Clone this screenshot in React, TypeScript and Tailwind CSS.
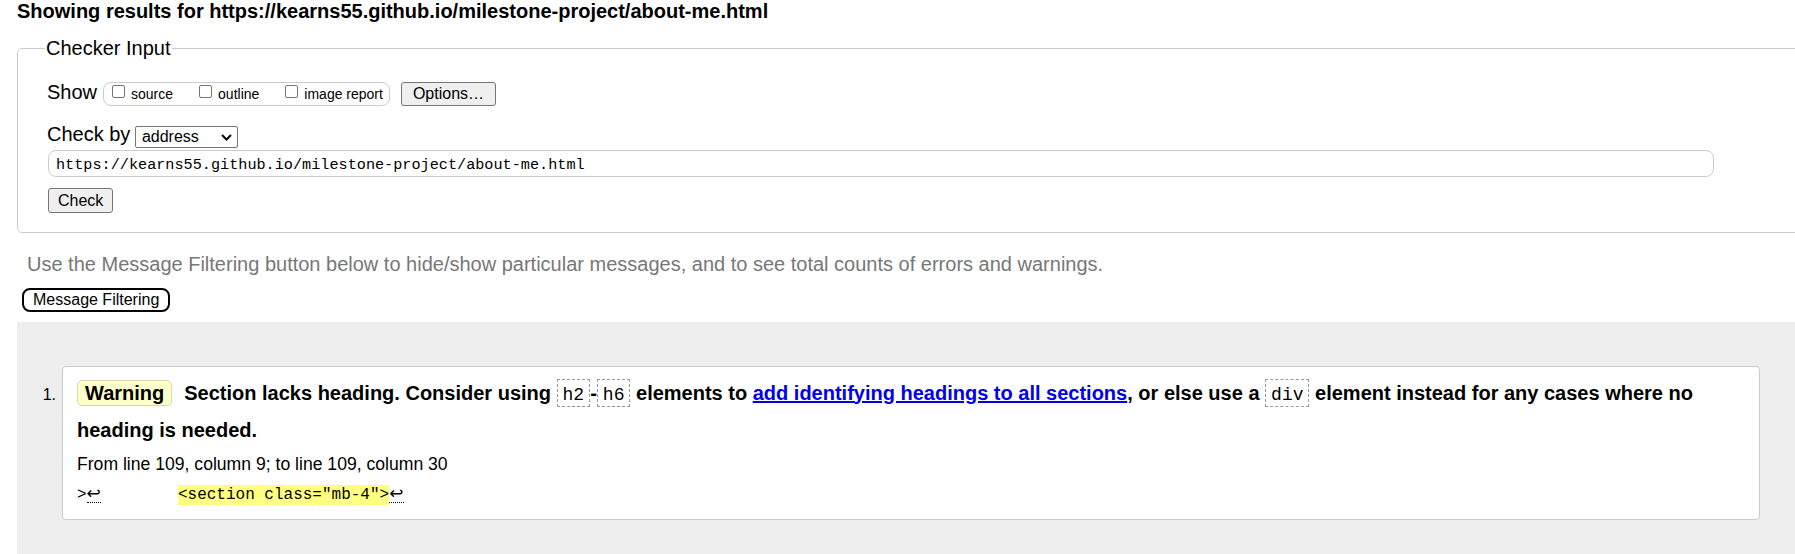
export default function App() {
  const mono = "font-['Liberation_Mono','DejaVu_Sans_Mono',monospace]";

  const Code = ({ children }: { children: string }) => (
    <code className={`inline-block border border-dashed border-[#999] px-[5px] pt-[4px] text-[18px] leading-[22px] font-normal ${mono}`}>
      {children}
    </code>
  );

  const Lf = () => (
    <span className="inline-block w-[14.5px] border-b border-dotted border-black leading-[17px] font-['DejaVu_Sans',sans-serif] text-[17px]">↩</span>
  );

  const Box = () => (
    <span className="inline-block w-[13px] h-[13px] ml-[4px] mr-[6px] mb-[5px] border border-[#767676] rounded-[2px] bg-white" />
  );

  return (
    <div className="w-[1795px] h-[554px] overflow-hidden bg-white text-black font-['Liberation_Sans',Arial,sans-serif]">
      <h2 className="pl-[17px] text-[20px] leading-[23px] font-bold whitespace-nowrap">
        Showing results for https://kearns55.github.io/milestone-project/about-me.html
      </h2>

      <fieldset className="ml-[17px] mt-[13.5px] w-[1800px] border border-[#ccc] rounded-[5px] pl-[29px] pt-[22.5px] pb-[19px]">
        <legend className="-ml-[2px] px-[1px] text-[20px] leading-[23px]">Checker Input</legend>

        <div className="flex items-center h-[24px]">
          <span className="text-[20px] leading-[20px] mb-[4px]">Show</span>
          <div className="ml-[6px] h-[24px] flex items-center border border-[#ccc] rounded-[8px] pl-[4px] pr-[6px] text-[14px] leading-[16px]">
            <label className="flex items-center mr-[22px]"><Box />source</label>
            <label className="flex items-center mr-[22px]"><Box />outline</label>
            <label className="flex items-center"><Box />image report</label>
          </div>
          <button className="ml-[11px] h-[24px] px-[11px] border border-[#767676] bg-[#efefef] rounded-[3px] text-[16px] leading-[18px]">
            Options…
          </button>
        </div>

        <div className="mt-[17px] flex items-start">
          <span className="text-[20px] leading-[23px]">Check by</span>
          <div className="ml-[4.5px] mt-[3px] h-[22px] w-[103px] flex items-center justify-between border border-[#767676] rounded-[2px] bg-white pl-[6px] pr-[5px] text-[16px]">
            <span>address</span>
            <svg width="11" height="7" viewBox="0 0 11 7">
              <path d="M1 1l4.5 4.5L10 1" stroke="#000" strokeWidth="2" fill="none" />
            </svg>
          </div>
        </div>

        <div className={`ml-[1px] mt-[2px] h-[27px] w-[1666px] flex items-center border border-[#ccc] rounded-[8px] pl-[7px] pt-[4px] text-[15.2px] ${mono}`}>
          https://kearns55.github.io/milestone-project/about-me.html
        </div>

        <button className="ml-[1px] mt-[11px] block h-[25px] px-[9px] border border-[#767676] bg-[#efefef] rounded-[3px] text-[16px] leading-[18px]">
          Check
        </button>
      </fieldset>

      <p className="ml-[27px] mt-[19.5px] text-[20px] leading-[23px] text-[#777] whitespace-nowrap">
        Use the Message Filtering button below to hide/show particular messages, and to see total counts of errors and warnings.
      </p>

      <button className="ml-[22px] mt-[12px] block h-[24px] px-[9px] border-2 border-black rounded-[8px] bg-white text-[16px] leading-[18px]">
        Message Filtering
      </button>

      <div className="ml-[17px] mt-[10px] w-[1800px] h-[300px] bg-[#eeeeee] pt-[44px]">
        <div className="flex">
          <div className="w-[39px] mt-[20px] text-right text-[16px] leading-[18px]">1.</div>
          <div className="ml-[6px] w-[1698px] bg-white border border-[#ccc] rounded-[4px] px-[14px] pt-[8px] pb-[14px]">
            <p className="text-[20px] leading-[37px] font-bold">
              <span className="inline-block mr-[12px] px-[7px] leading-[24px] border border-[#dcd8a8] rounded-[5px] bg-[#ffffcc]">Warning</span>
              Section lacks heading. Consider using <Code>h2</Code>-<Code>h6</Code> elements to{" "}
              <a className="text-[#0000ee] underline">add identifying headings to all sections</a>, or else use a{" "}
              <Code>div</Code> element instead for any cases where no heading is needed.
            </p>
            <p className="mt-[5px] text-[17.6px] leading-[20px]">From line 109, column 9; to line 109, column 30</p>
            <p className={`mt-[11.5px] text-[16px] leading-[20px] whitespace-pre ${mono}`}>
              <span>&gt;</span>
              <Lf />
              {"        "}
              <span className="inline-block bg-[#ffff80]">{'<section class="mb-4">'}</span>
              <Lf />
            </p>
          </div>
        </div>
      </div>
    </div>
  );
}
